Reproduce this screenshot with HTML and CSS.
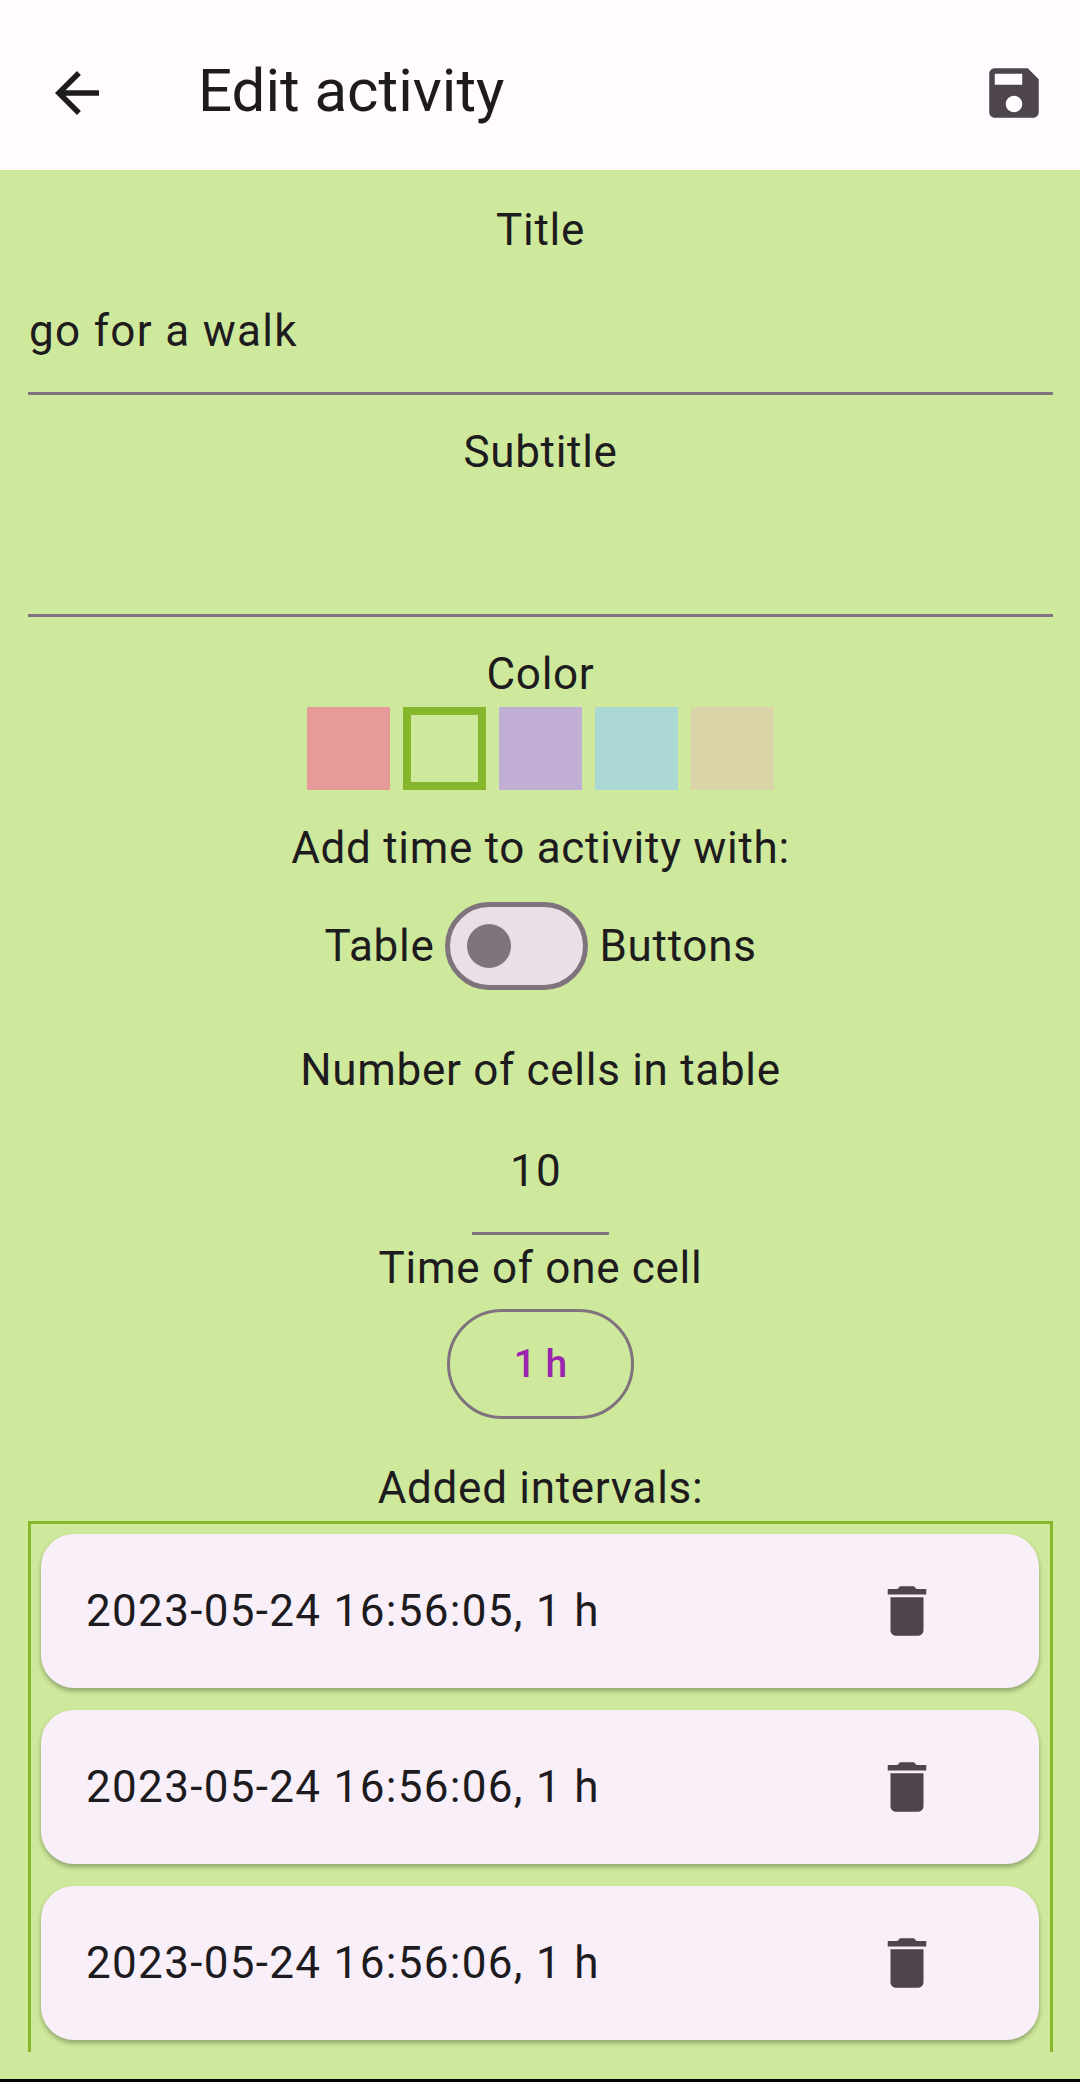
FILE: index.html
```html
<!DOCTYPE html>
<html lang="en">
<head>
<meta charset="utf-8">
<meta name="viewport" content="width=device-width, initial-scale=1">
<title>Edit activity</title>
<link rel="stylesheet" href="styles.css">
</head>
<body>
<svg class="sprite" aria-hidden="true">
  <symbol id="icon-delete" viewBox="0 0 24 24"><path d="M6 19c0 1.1.9 2 2 2h8c1.1 0 2-.9 2-2V7H6v12zM19 4h-3.5l-1-1h-5l-1 1H5v2h14V4z"/></symbol>
</svg>
<header class="app-bar">
  <button class="icon-button back" type="button" aria-label="Back">
    <svg class="icon" viewBox="0 0 24 24"><path d="M20 11H7.83l5.59-5.59L12 4l-8 8 8 8 1.41-1.41L7.83 13H20v-2z"/></svg>
  </button>
  <h1 class="app-title">Edit activity</h1>
  <button class="icon-button" type="submit" form="activity" aria-label="Save">
    <svg class="icon" viewBox="0 0 24 24"><path d="M17 3H5c-1.11 0-2 .9-2 2v14c0 1.1.89 2 2 2h14c1.1 0 2-.9 2-2V7l-4-4zm-5 16c-1.66 0-3-1.34-3-3s1.34-3 3-3 3 1.34 3 3-1.34 3-3 3zm3-10H5V5h10v4z"/></svg>
  </button>
</header>
<main class="content">
  <form class="form" id="activity">
    <div class="field">
      <label class="label" for="title">Title</label>
      <input class="text-input" id="title" type="text" value="go for a walk">
    </div>
    <div class="field">
      <label class="label" for="subtitle">Subtitle</label>
      <input class="text-input" id="subtitle" type="text">
    </div>
    <fieldset class="field">
      <legend class="label">Color</legend>
      <div class="swatches">
        <input class="swatch red" type="radio" name="color" aria-label="Red">
        <input class="swatch green" type="radio" name="color" aria-label="Green" checked>
        <input class="swatch purple" type="radio" name="color" aria-label="Purple">
        <input class="swatch teal" type="radio" name="color" aria-label="Teal">
        <input class="swatch sand" type="radio" name="color" aria-label="Sand">
      </div>
    </fieldset>
    <div class="field mode">
      <p class="label">Add time to activity with:</p>
      <div class="switch-row">
        <span>Table</span>
        <input class="switch" id="mode" type="checkbox" role="switch" aria-label="Use buttons instead of the table">
        <label for="mode">Buttons</label>
      </div>
    </div>
    <div class="field cells">
      <label class="label" for="cells">Number of cells in table</label>
      <input class="text-input short" id="cells" type="text" inputmode="numeric" value="10">
    </div>
    <div class="time">
      <p class="label">Time of one cell</p>
      <button class="time-button" type="button">1 h</button>
    </div>
  </form>
  <section class="intervals">
    <h2 class="label">Added intervals:</h2>
    <ul class="interval-list">
      <li class="interval">
        <span>2023-05-24 16:56:05, 1 h</span>
        <button class="icon-button" type="button" aria-label="Delete"><svg class="icon"><use href="#icon-delete"/></svg></button>
      </li>
      <li class="interval">
        <span>2023-05-24 16:56:06, 1 h</span>
        <button class="icon-button" type="button" aria-label="Delete"><svg class="icon"><use href="#icon-delete"/></svg></button>
      </li>
      <li class="interval">
        <span>2023-05-24 16:56:06, 1 h</span>
        <button class="icon-button" type="button" aria-label="Delete"><svg class="icon"><use href="#icon-delete"/></svg></button>
      </li>
    </ul>
  </section>
</main>
</body>
</html>
```
FILE: styles.css
```css
:root {
  --ink: #1d1b1e;
  --icon: #4d444c;
  --outline: #7f747d;
  --page: #cee99b;
  --accent: #86b62b;
  --tracking-label: 0.016em;
  --tracking-body: 0.03em;
}

* {
  box-sizing: border-box;
}

body {
  margin: 0;
  min-height: 100vh;
  display: flex;
  flex-direction: column;
  background: var(--page);
  border-bottom: 3px solid #000;
  color: var(--ink);
  font: 400 44px/66px Roboto, sans-serif;
}

.sprite {
  display: none;
}

.app-bar {
  display: flex;
  align-items: center;
  padding: 16px 33px 0 44px;
  height: 170px;
  background: #fffbff;
}

.app-title {
  flex: 1;
  margin: 0;
  padding-bottom: 4px;
  font-size: 60px;
  font-weight: 400;
  line-height: 76px;
}

.icon-button {
  display: block;
  padding: 0;
  border: 0;
  background: none;
  color: var(--icon);
}

.back {
  margin-right: 88px;
  color: var(--ink);
}

.icon {
  display: block;
  width: 66px;
  height: 66px;
  fill: currentColor;
}

.content {
  flex: 1;
  display: flex;
  flex-direction: column;
  padding: 27px 27px 27px 28px;
}

.form {
  display: flex;
  flex-direction: column;
}

.field {
  display: flex;
  flex-direction: column;
  align-items: center;
  min-width: 0;
  margin: 0 0 24px;
  padding: 0;
  border: 0;
}

.label {
  margin: 0;
  padding: 0;
  font-size: 44px;
  font-weight: 400;
  letter-spacing: var(--tracking-label);
  text-align: center;
}

.text-input {
  width: 100%;
  height: 132px;
  padding: 6px 0 0 1px;
  border: 0;
  border-bottom: 3px solid var(--outline);
  border-radius: 0;
  background: none;
  color: inherit;
  font: inherit;
  letter-spacing: var(--tracking-body);
  outline: 0;
}

.short {
  width: 137px;
  padding-right: 10px;
  text-align: center;
}

.swatches {
  display: flex;
  justify-content: center;
  gap: 13px;
  height: 84px;
}

.swatch {
  appearance: none;
  width: 83px;
  height: 83px;
  margin: 0;
}

.swatch:checked {
  border: 8px solid var(--accent);
}

.red { background: #e79b99; }
.green { background: #cee99b; }
.purple { background: #c1aed4; }
.teal { background: #abd8d5; }
.sand { background: #dbd4a9; }

.mode {
  margin-bottom: 26px;
}

.switch-row {
  display: flex;
  align-items: center;
  justify-content: center;
  gap: 11px;
  height: 130px;
  letter-spacing: var(--tracking-label);
}

.switch {
  appearance: none;
  display: flex;
  align-items: center;
  width: 143px;
  height: 88px;
  margin: 0;
  padding: 0 17px;
  border: 5px solid var(--outline);
  border-radius: 44px;
  background: #ebdfe7;
}

.switch::before {
  content: "";
  width: 44px;
  height: 44px;
  border-radius: 50%;
  background: var(--outline);
}

.switch:checked {
  justify-content: flex-end;
}

.cells {
  margin-bottom: 0;
}

.time {
  display: flex;
  flex-direction: column;
  align-items: center;
  gap: 8px;
}

.time-button {
  height: 110px;
  padding: 0 64px;
  border: 3px solid var(--outline);
  border-radius: 55px;
  background: none;
  color: #9a25ae;
  font: 500 39px/55px Roboto, sans-serif;
}

.intervals {
  flex: 1;
  display: flex;
  flex-direction: column;
  margin-top: 36px;
}

.interval-list {
  flex: 1;
  display: flex;
  flex-direction: column;
  gap: 22px;
  margin: 0;
  padding: 10px 11px 12px 10px;
  border: 3px solid var(--accent);
  border-bottom: 0;
  list-style: none;
}

.interval {
  display: flex;
  align-items: center;
  justify-content: space-between;
  height: 154px;
  padding: 0 99px 0 45px;
  border-radius: 33px;
  background: #f9eff9;
  box-shadow: 0 3px 5px rgba(0, 0, 0, 0.3);
  letter-spacing: var(--tracking-body);
}
```
